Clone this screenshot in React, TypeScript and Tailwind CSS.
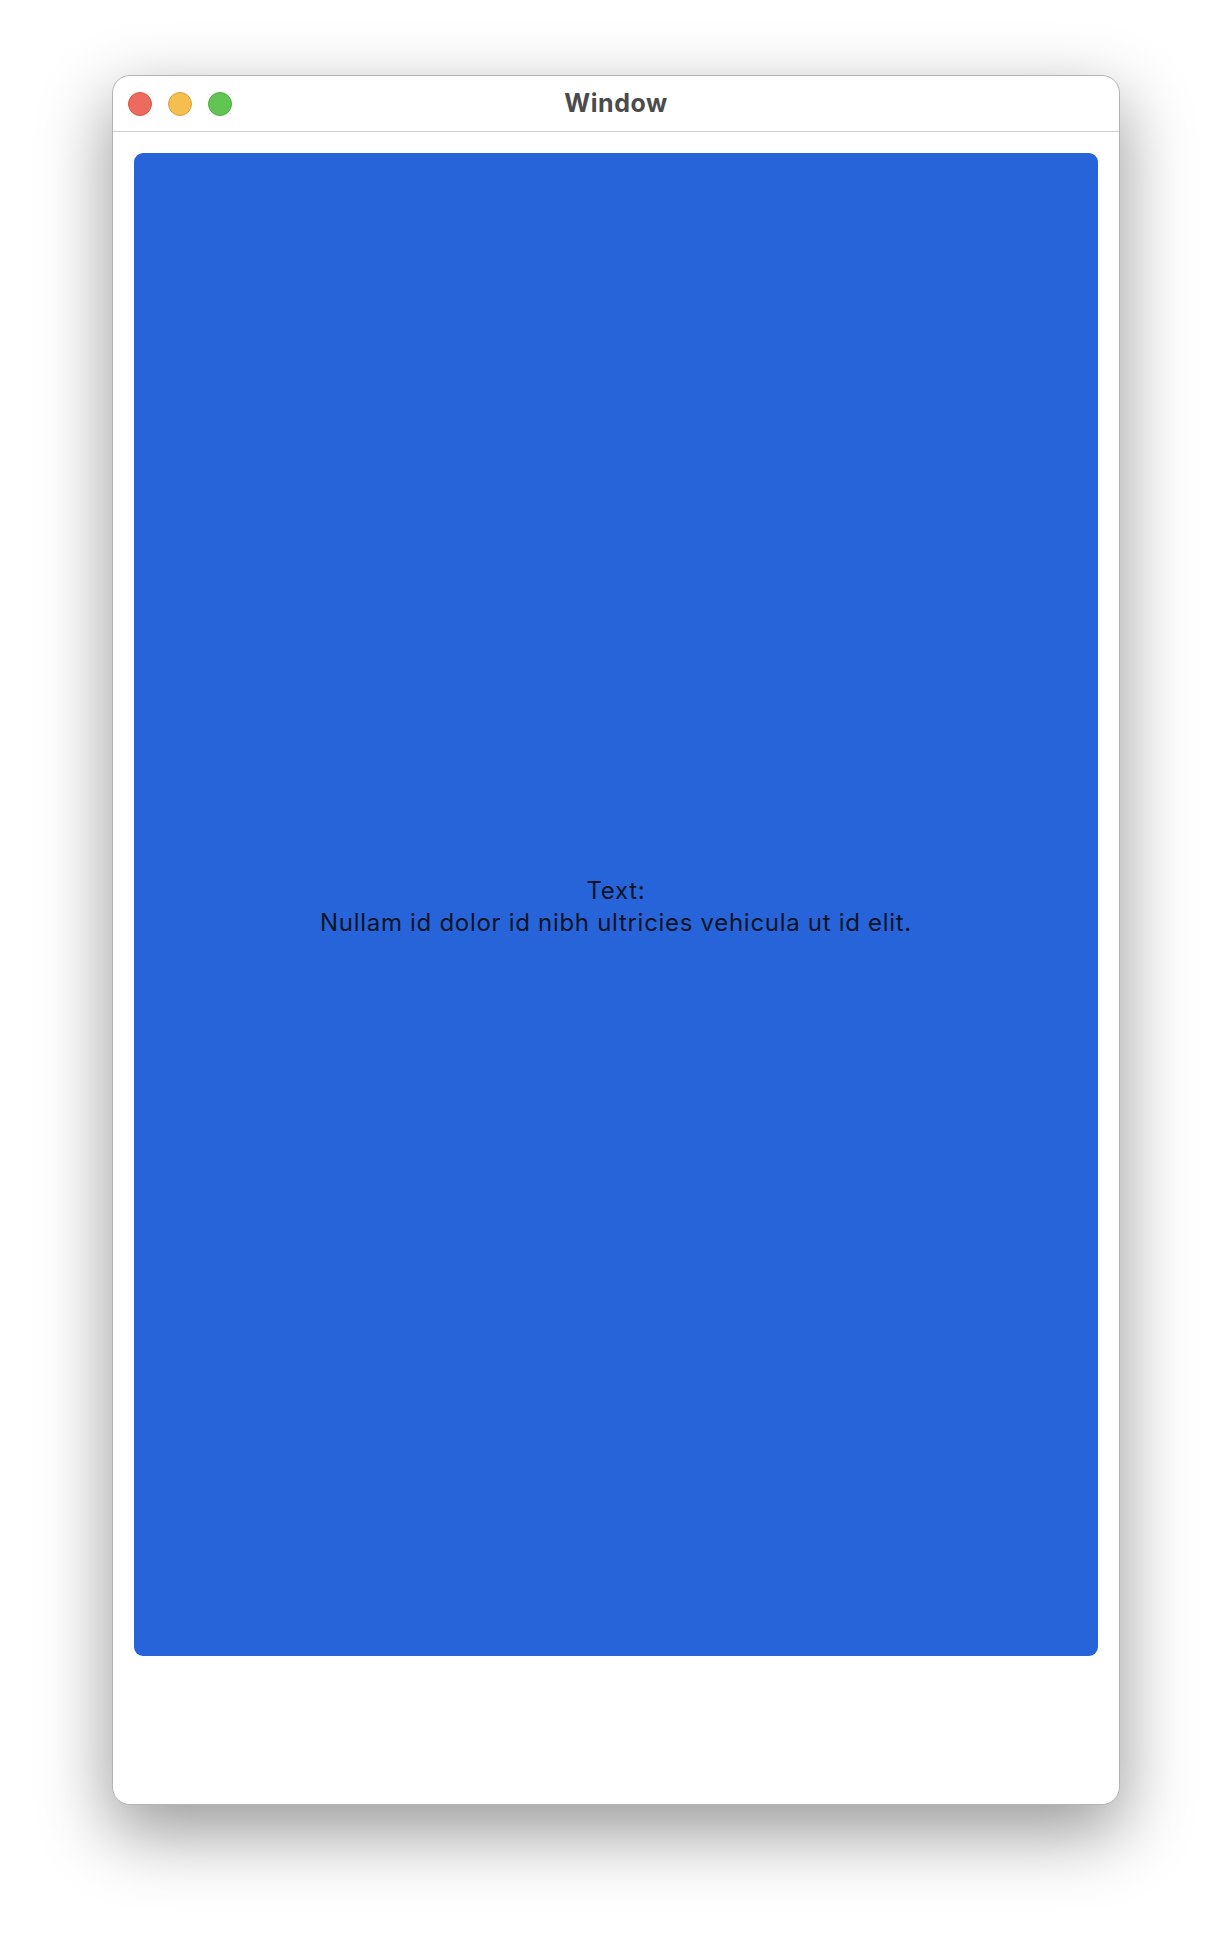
import React from "react";

const lights = [
  "bg-[#ed6a5e] border-[#d5554a]",
  "bg-[#f5bf4f] border-[#d9a23c]",
  "bg-[#61c554] border-[#4ea943]",
];

const App: React.FC = () => {
  return (
    <div
      className="w-[1232px] h-[1954px] bg-white flex justify-center pt-[75px]"
      style={{ fontFamily: "Inter, 'Open Sans', sans-serif" }}
    >
      <div className="w-[1008px] h-[1730px] flex flex-col bg-white border border-[#b4b4b4] rounded-[18px] overflow-hidden shadow-[0_26px_70px_2px_rgba(0,0,0,0.40)]">
        {/* title bar */}
        <div className="h-[56px] shrink-0 grid grid-cols-[1fr_auto_1fr] items-center border-b border-[#cdcdcd]">
          <div className="flex items-center gap-4 pl-[15px]">
            {lights.map((c) => (
              <span key={c} className={`w-6 h-6 rounded-full border ${c}`} />
            ))}
          </div>
          <span className="text-[25px] font-bold text-[#4b4b4b] tracking-[0.5px]">Window</span>
          <div />
        </div>

        {/* content */}
        <div className="p-[21px]">
          <div className="h-[1503px] pt-[5px] rounded-[9px] bg-[#2864d9] flex items-center justify-center text-center text-2xl tracking-[0.7px] text-[#0c1428]">
            <p>
              Text:
              <br />
              Nullam id dolor id nibh ultricies vehicula ut id elit.
            </p>
          </div>
        </div>
      </div>
    </div>
  );
};

export default App;
